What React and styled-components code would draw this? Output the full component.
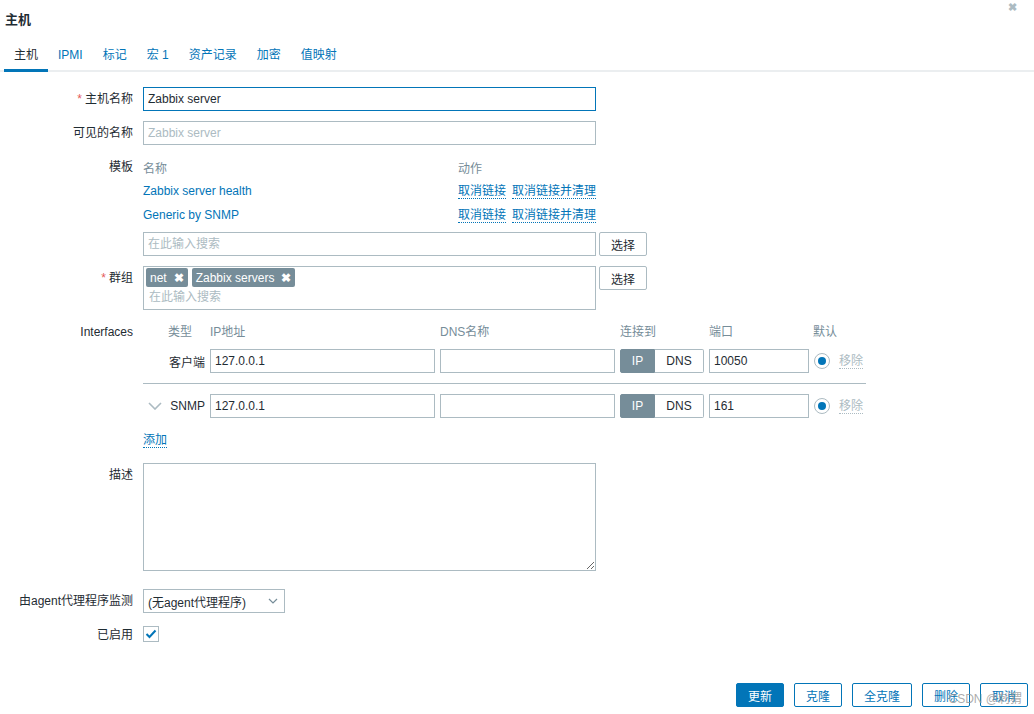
import React from "react";
import styled, { createGlobalStyle } from "styled-components";

const Global = createGlobalStyle`
  html, body { margin: 0; padding: 0; background: #fff; }
  body { font-family: "Liberation Sans", Arial, "Noto Sans CJK SC", sans-serif; font-size: 12px; color: #1f2c33; }
  * { box-sizing: border-box; }
`;

const Page = styled.div`
  position: relative;
  height: 714px;
  display: flex;
  flex-direction: column;
  overflow: hidden;
`;

const Header = styled.div`
  height: 36px;
  padding: 0 5px;
  display: flex;
  align-items: center;
  justify-content: space-between;
`;

const Title = styled.h4`
  margin: 0;
  font-size: 13px;
  font-weight: bold;
  color: #1f2c33;
`;

const Close = styled.span`
  align-self: flex-start;
  margin-top: 1px;
  margin-right: 12px;
  color: #acbbc2;
  font-size: 11px;
  font-weight: bold;
  line-height: 12px;
`;

const Tabs = styled.div`
  display: flex;
  padding-left: 4px;
  border-bottom: 2px solid #ebeef0;
`;

const Tab = styled.div`
  padding: 11px 10px 6px;
  line-height: 16px;
  margin-bottom: -2px;
  border-bottom: 3px solid ${(p) => (p.$active ? "#0275b8" : "transparent")};
  color: ${(p) => (p.$active ? "#1f2c33" : "#0275b8")};
`;

const Form = styled.div`
  display: grid;
  grid-template-columns: 133px 1fr;
  column-gap: 10px;
  row-gap: 10px;
  padding-top: 15px;
`;

const Label = styled.div`
  text-align: right;
  line-height: 24px;
  white-space: nowrap;
  margin-top: ${(p) => p.$mt || 0}px;
`;

const Req = styled.span`
  color: #e45959;
  margin-right: 3px;
`;

const Field = styled.div`
  min-width: 0;
  margin-top: ${(p) => p.$mt || 0}px;
`;

const Input = styled.input`
  display: block;
  width: ${(p) => p.$w || 453}px;
  height: 24px;
  border: 1px solid ${(p) => (p.$focus ? "#0275b8" : "#acbbc2")};
  padding: 0 4px;
  font: inherit;
  font-size: 12px;
  color: #1f2c33;
  outline: none;
  background: #fff;
  &::placeholder { color: #acbbc2; }
`;

const InlineRow = styled.div`
  display: flex;
  align-items: flex-start;
  gap: 3px;
  margin-top: ${(p) => p.$mt || 0}px;
`;

const Btn = styled.button`
  height: 24px;
  padding: 0 11px;
  font: inherit;
  font-size: 12px;
  background: #fff;
  color: #1f2c33;
  border: 1px solid #acbbc2;
  border-radius: 2px;
`;

const TplTable = styled.div`
  display: grid;
  grid-template-columns: 315px 138px;
  grid-auto-rows: 24px;
  align-items: center;
  width: 453px;
`;

const TH = styled.div`
  color: #768d99;
`;

const Link = styled.span`
  color: #0275b8;
`;

const DotLink = styled.span`
  color: ${(p) => (p.$grey ? "#acbbc2" : "#0275b8")};
  border-bottom: 1px dotted ${(p) => (p.$grey ? "#acbbc2" : "#0275b8")};
  line-height: 14px;
  white-space: nowrap;
`;

const Actions = styled.div`
  display: flex;
  gap: 6px;
`;

const Multi = styled.div`
  width: 453px;
  height: 44px;
  border: 1px solid #acbbc2;
  padding: 1px 2px;
`;

const Tags = styled.div`
  display: flex;
  gap: 4px;
`;

const Tag = styled.span`
  display: inline-flex;
  align-items: center;
  gap: 7px;
  height: 19px;
  padding: 0 4px;
  background: #768d99;
  color: #fff;
  border-radius: 2px;
  font-size: 12px;
`;

const TagX = styled.span`
  font-weight: bold;
  font-size: 12px;
`;

const Placeholder = styled.div`
  color: #acbbc2;
  padding-left: 3px;
  line-height: 20px;
`;

const IfTable = styled.div`
  width: 723px;
`;

const IfGrid = styled.div`
  display: grid;
  grid-template-columns: 62px 225px 175px 84px 100px 16px auto;
  column-gap: 5px;
  align-items: center;
  padding: ${(p) => p.$pad || "0"};
  border-bottom: ${(p) => (p.$line ? "1px solid #acbbc2" : "none")};
`;

const IfHead = styled.div`
  color: #768d99;
  line-height: 24px;
  white-space: nowrap;
  grid-column: ${(p) => (p.$span ? `span ${p.$span}` : "auto")};
  text-align: ${(p) => (p.$right ? "right" : "left")};
  padding-right: ${(p) => (p.$right ? 13 : 0)}px;
  margin-left: ${(p) => p.$ml || 0}px;
`;

const TypeCell = styled.div`
  display: flex;
  align-items: center;
  justify-content: space-between;
  padding-left: 5px;
`;

const Toggle = styled.div`
  display: flex;
  height: 24px;
`;

const ToggleOpt = styled.span`
  display: flex;
  align-items: center;
  justify-content: center;
  width: ${(p) => p.$w}px;
  background: ${(p) => (p.$on ? "#768d99" : "#fff")};
  color: ${(p) => (p.$on ? "#fff" : "#1f2c33")};
  border: 1px solid ${(p) => (p.$on ? "#768d99" : "#acbbc2")};
  border-left-width: ${(p) => (p.$on ? 1 : 0)}px;
  border-radius: ${(p) => (p.$on ? "2px 0 0 2px" : "0 2px 2px 0")};
`;

const Radio = styled.span`
  width: 16px;
  height: 16px;
  border: 1px solid #acbbc2;
  border-radius: 50%;
  display: flex;
  align-items: center;
  justify-content: center;
  &::after {
    content: "";
    width: 8px;
    height: 8px;
    border-radius: 50%;
    background: #0275b8;
  }
`;

const Remove = styled.div`
  padding-left: 4px;
`;

const AddRow = styled.div`
  margin-top: 14px;
  line-height: 16px;
  padding-bottom: 5px;
`;

const TextArea = styled.textarea`
  display: block;
  width: 453px;
  height: 108px;
  border: 1px solid #acbbc2;
  font: inherit;
  resize: both;
  outline: none;
`;

const Select = styled.div`
  width: 142px;
  height: 24px;
  border: 1px solid #acbbc2;
  display: flex;
  align-items: center;
  justify-content: space-between;
  padding: 0 6px 0 4px;
`;

const Check = styled.span`
  display: flex;
  align-items: center;
  justify-content: center;
  width: 16px;
  height: 16px;
  margin-top: 3px;
  border: 1px solid #acbbc2;
`;

const Footer = styled.div`
  margin-top: auto;
  display: flex;
  justify-content: flex-end;
  gap: 10px;
  padding: 0 6px 7px 0;
`;

const FBtn = styled.button`
  height: 24px;
  padding: 0 11px;
  font: inherit;
  font-size: 12px;
  border-radius: 2px;
  border: 1px solid #0275b8;
  background: ${(p) => (p.$primary ? "#0275b8" : "#fff")};
  color: ${(p) => (p.$primary ? "#fff" : "#0275b8")};
`;

const Watermark = styled.div`
  position: absolute;
  right: 12px;
  bottom: 8px;
  color: rgba(150, 150, 150, 0.8);
  font-size: 12px;
  pointer-events: none;
`;

const Chevron = () => (
  <svg width="14" height="8" viewBox="0 0 14 8">
    <path d="M1 1l6 6 6-6" fill="none" stroke="#acbbc2" strokeWidth="1.6" />
  </svg>
);

const SmallChevron = () => (
  <svg width="10" height="6" viewBox="0 0 10 6">
    <path d="M1 1l4 4 4-4" fill="none" stroke="#768d99" strokeWidth="1.2" />
  </svg>
);

const CheckMark = () => (
  <svg width="12" height="10" viewBox="0 0 12 10">
    <path d="M1.5 5l3 3 6-6.5" fill="none" stroke="#0275b8" strokeWidth="2" />
  </svg>
);

const InterfaceRow = ({ type, chevron, ip, port, line, pad }) => (
  <IfGrid $line={line} $pad={pad}>
    <TypeCell>
      <span>{chevron ? <Chevron /> : null}</span>
      <span>{type}</span>
    </TypeCell>
    <Input $w={225} defaultValue={ip} />
    <Input $w={175} />
    <Toggle>
      <ToggleOpt $on $w={35}>IP</ToggleOpt>
      <ToggleOpt $w={49}>DNS</ToggleOpt>
    </Toggle>
    <Input $w={100} defaultValue={port} />
    <Radio />
    <Remove>
      <DotLink $grey>移除</DotLink>
    </Remove>
  </IfGrid>
);

export default function App() {
  return (
    <Page>
      <Global />
      <Header>
        <Title>主机</Title>
        <Close>✖</Close>
      </Header>
      <Tabs>
        <Tab $active>主机</Tab>
        <Tab>IPMI</Tab>
        <Tab>标记</Tab>
        <Tab>宏 1</Tab>
        <Tab>资产记录</Tab>
        <Tab>加密</Tab>
        <Tab>值映射</Tab>
      </Tabs>
      <Form>
        <Label><Req>*</Req>主机名称</Label>
        <Field><Input $focus defaultValue="Zabbix server" /></Field>

        <Label>可见的名称</Label>
        <Field><Input placeholder="Zabbix server" /></Field>

        <Label>模板</Label>
        <Field>
          <TplTable>
            <TH>名称</TH>
            <TH>动作</TH>
            <Link>Zabbix server health</Link>
            <Actions><DotLink>取消链接</DotLink><DotLink>取消链接并清理</DotLink></Actions>
            <Link>Generic by SNMP</Link>
            <Actions><DotLink>取消链接</DotLink><DotLink>取消链接并清理</DotLink></Actions>
          </TplTable>
          <InlineRow $mt={5}>
            <Input placeholder="在此输入搜索" />
            <Btn>选择</Btn>
          </InlineRow>
        </Field>

        <Label><Req>*</Req>群组</Label>
        <Field>
          <InlineRow>
            <Multi>
              <Tags>
                <Tag>net<TagX>✖</TagX></Tag>
                <Tag>Zabbix servers<TagX>✖</TagX></Tag>
              </Tags>
              <Placeholder>在此输入搜索</Placeholder>
            </Multi>
            <Btn>选择</Btn>
          </InlineRow>
        </Field>

        <Label>Interfaces</Label>
        <Field>
          <IfTable>
            <IfGrid>
              <IfHead $right>类型</IfHead>
              <IfHead>IP地址</IfHead>
              <IfHead>DNS名称</IfHead>
              <IfHead>连接到</IfHead>
              <IfHead>端口</IfHead>
              <IfHead $span={2} $ml={-1}>默认</IfHead>
            </IfGrid>
            <InterfaceRow type="客户端" ip="127.0.0.1" port="10050" line pad="5px 0 10px" />
            <InterfaceRow type="SNMP" chevron ip="127.0.0.1" port="161" pad="10px 0 0" />
            <AddRow><DotLink>添加</DotLink></AddRow>
          </IfTable>
        </Field>

        <Label>描述</Label>
        <Field><TextArea /></Field>

        <Label $mt={8}>由agent代理程序监测</Label>
        <Field $mt={8}>
          <Select>
            <span>(无agent代理程序)</span>
            <SmallChevron />
          </Select>
        </Field>

        <Label>已启用</Label>
        <Field>
          <Check><CheckMark /></Check>
        </Field>
      </Form>
      <Footer>
        <FBtn $primary>更新</FBtn>
        <FBtn>克隆</FBtn>
        <FBtn>全克隆</FBtn>
        <FBtn>删除</FBtn>
        <FBtn>取消</FBtn>
      </Footer>
      <Watermark>CSDN @刺猬</Watermark>
    </Page>
  );
}
